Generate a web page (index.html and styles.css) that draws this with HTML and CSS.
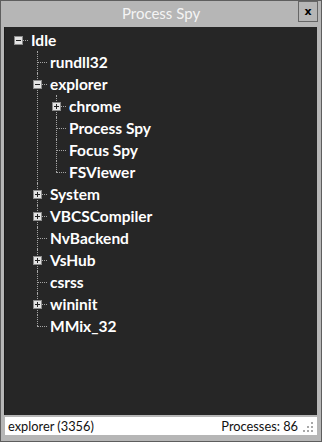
FILE: index.html
```html
<!DOCTYPE html>
<html lang="en">
<head>
    <meta charset="UTF-8">
    <title>Process Spy</title>
    <link rel="stylesheet" href="styles.css">
</head>
<body>
    <div class="window">
        <!-- Title bar -->
        <div class="title-bar">
            <span></span>
            <span class="title">Process Spy</span>
            <button class="close-btn">x</button>
        </div>

        <!-- Process tree -->
        <div class="tree-panel">
            <ul class="tree">
                <li>
                    <div class="node"><span class="exp"><i class="box minus"></i></span><span class="label">Idle</span></div>
                    <ul>
                        <li><div class="node"><span class="exp"></span><span class="label">rundll32</span></div></li>
                        <li>
                            <div class="node"><span class="exp"><i class="box minus"></i></span><span class="label">explorer</span></div>
                            <ul>
                                <li><div class="node"><span class="exp"><i class="box plus"></i></span><span class="label">chrome</span></div></li>
                                <li><div class="node"><span class="exp"></span><span class="label">Process Spy</span></div></li>
                                <li><div class="node"><span class="exp"></span><span class="label">Focus Spy</span></div></li>
                                <li><div class="node"><span class="exp"></span><span class="label">FSViewer</span></div></li>
                            </ul>
                        </li>
                        <li><div class="node"><span class="exp"><i class="box plus"></i></span><span class="label">System</span></div></li>
                        <li><div class="node"><span class="exp"><i class="box plus"></i></span><span class="label">VBCSCompiler</span></div></li>
                        <li><div class="node"><span class="exp"></span><span class="label">NvBackend</span></div></li>
                        <li><div class="node"><span class="exp"><i class="box plus"></i></span><span class="label">VsHub</span></div></li>
                        <li><div class="node"><span class="exp"></span><span class="label">csrss</span></div></li>
                        <li><div class="node"><span class="exp"><i class="box plus"></i></span><span class="label">wininit</span></div></li>
                        <li><div class="node"><span class="exp"></span><span class="label">MMix_32</span></div></li>
                    </ul>
                </li>
            </ul>
        </div>

        <!-- Status bar -->
        <div class="status-bar">
            <span class="status-left">explorer (3356)</span>
            <span class="status-right">Processes: 86</span>
            <svg class="grip" width="12" height="12" viewBox="0 0 12 12">
                <rect x="8" y="0" width="2" height="2" fill="#a8a8a8"/>
                <rect x="4" y="4" width="2" height="2" fill="#a8a8a8"/>
                <rect x="8" y="4" width="2" height="2" fill="#a8a8a8"/>
                <rect x="0" y="8" width="2" height="2" fill="#a8a8a8"/>
                <rect x="4" y="8" width="2" height="2" fill="#a8a8a8"/>
                <rect x="8" y="8" width="2" height="2" fill="#a8a8a8"/>
            </svg>
        </div>
    </div>
</body>
</html>
```

FILE: styles.css
```css
body {
    margin: 0;
    font-family: 'Lato', 'Open Sans', sans-serif;
}
.window {
    width: 322px;
    height: 442px;
    box-sizing: border-box;
    border: 1px solid #5e5e5e;
    background-color: #b6b6b6;
    display: flex;
    flex-direction: column;
}
.title-bar {
    height: 26px;
    display: grid;
    grid-template-columns: 1fr auto 1fr;
    align-items: start;
}
.title {
    color: #f4f4f4;
    font-size: 15px;
    line-height: 24px;
}
.close-btn {
    justify-self: end;
    width: 20px;
    height: 21px;
    margin-right: 3px;
    padding: 0;
    border: 1px solid #666;
    background: transparent;
    font-family: 'DejaVu Sans', sans-serif;
    font-weight: bold;
    font-size: 11px;
    color: #000;
}
.tree-panel {
    height: 388px;
    margin: 0 4px 0 3px;
    box-sizing: border-box;
    border-left: 1px solid #1c1c1c;
    background-color: #262626;
    padding: 2px 0 0 4px;
}
.tree, .tree ul {
    list-style: none;
    margin: 0;
    padding: 0;
}
.tree ul {
    margin-left: 19px;
}
.tree li {
    position: relative;
}
/* vertical connector */
.tree ul > li::before {
    content: "";
    position: absolute;
    left: 9px;
    top: 0;
    bottom: 0;
    border-left: 1px dotted #a4a4a4;
}
.tree ul > li:last-child::before {
    bottom: auto;
    height: 11px;
}
.node {
    display: flex;
    align-items: center;
    height: 22px;
}
.exp {
    position: relative;
    flex: none;
    width: 19px;
    height: 22px;
}
/* horizontal connector */
.exp::before {
    content: "";
    position: absolute;
    left: 9px;
    right: 0;
    top: 11px;
    border-top: 1px dotted #a4a4a4;
}
.box {
    position: absolute;
    left: 5px;
    top: 7px;
    width: 9px;
    height: 9px;
    box-sizing: border-box;
    border: 1px solid #8c8c8c;
    background-color: #e4e4e4;
    z-index: 1;
}
.box::before, .box.plus::after {
    content: "";
    position: absolute;
    background-color: #222;
}
.box::before {
    left: 1px;
    top: 3px;
    width: 5px;
    height: 1px;
}
.box.plus::after {
    left: 3px;
    top: 1px;
    width: 1px;
    height: 5px;
}
.label {
    margin-left: 3px;
    color: #fff;
    font-weight: bold;
    font-size: 15.5px;
    line-height: 22px;
    white-space: nowrap;
}
.status-bar {
    height: 18px;
    margin: 2px 4px 0 4px;
    background-color: #fff;
    display: flex;
    align-items: center;
    font-size: 12.8px;
    color: #111;
}
.status-left {
    flex: 1;
    padding-left: 3px;
}
.status-right {
    padding-right: 5px;
}
.grip {
    align-self: flex-end;
    margin-right: 2px;
    margin-bottom: 1px;
}
```
